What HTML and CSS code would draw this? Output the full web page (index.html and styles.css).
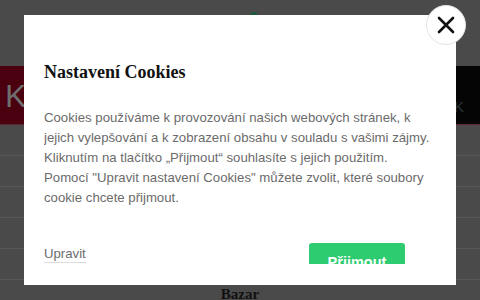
FILE: index.html
```html
<!DOCTYPE html>
<html lang="cs">
<head>
<meta charset="utf-8">
<link rel="stylesheet" href="styles.css">
</head>
<body>
<div class="page">
  <div class="topbar"><span class="dot"></span></div>
  <div class="band">
    <span class="k-left">K</span>
    <span class="band-dark"><span class="k-right">K</span></span>
  </div>
  <div class="row"></div>
  <div class="row"></div>
  <div class="row"></div>
  <div class="row"></div>
  <div class="row"></div>
  <div class="bazar">Bazar</div>
</div>

<div class="modal">
  <div class="modal-inner">
    <h2 class="title">Nastavení Cookies</h2>
    <p class="text">Cookies používáme k provozování našich webových stránek, k jejich vylepšování a k zobrazení obsahu v souladu s vašimi zájmy. Kliknutím na tlačítko „Přijmout“ souhlasíte s jejich použitím. Pomocí "Upravit nastavení Cookies" můžete zvolit, které soubory cookie chcete přijmout.</p>
    <div class="actions">
      <a class="edit">Upravit</a>
      <button class="accept">Přijmout</button>
    </div>
  </div>
</div>
<button class="close" aria-label="Zavřít">
  <svg width="18" height="18" viewBox="0 0 18 18"><path d="M2 2 L16 16 M16 2 L2 16" stroke="#111" stroke-width="2.6" stroke-linecap="round" fill="none"/></svg>
</button>
</body>
</html>
```
FILE: styles.css
```css
html, body {
  margin: 0;
  padding: 0;
  width: 480px;
  height: 300px;
  overflow: hidden;
  background: #4a4a4a;
}
.page {
  display: flex;
  flex-direction: column;
}
.topbar {
  height: 66px;
  position: relative;
}
.dot {
  position: absolute;
  left: 250px;
  top: 12px;
  width: 8px;
  height: 4px;
  border-radius: 4px 4px 0 0;
  background: #1f5a3e;
}
.band {
  height: 58px;
  display: flex;
  justify-content: space-between;
  background: #4b0010;
  border-bottom: 1px solid #5c2a32;
}
.k-left {
  font-family: "Liberation Sans", Arial, sans-serif;
  font-size: 32px;
  color: #6e6e6e;
  padding: 14px 0 0 5px;
  line-height: 1;
}
.band-dark {
  width: 50px;
  background: #050505;
  display: flex;
  justify-content: flex-end;
  align-items: flex-end;
}
.k-right {
  font-family: "Liberation Sans", Arial, sans-serif;
  font-size: 15px;
  color: #2a3438;
  padding: 0 16px 9px 0;
}
.row {
  height: 30px;
  border-bottom: 1px solid #585858;
}
.bazar {
  font-family: "Liberation Serif", "Times New Roman", serif;
  font-weight: bold;
  font-size: 15px;
  color: #111;
  text-align: center;
  padding-top: 6px;
}
.modal {
  position: absolute;
  left: 24px;
  top: 15px;
  width: 432px;
  height: 270px;
  background: #fff;
  box-sizing: border-box;
  padding: 0 20px 21px 20px;
}
.modal-inner {
  height: 249px;
  overflow: hidden;
  padding-top: 46px;
  box-sizing: border-box;
}
.title {
  margin: 0;
  font-family: "Liberation Serif", "Times New Roman", serif;
  font-weight: bold;
  font-size: 18px;
  line-height: 22px;
  color: #111;
}
.text {
  margin: 25px 0 0 0;
  font-family: "Liberation Sans", Arial, sans-serif;
  font-size: 13.2px;
  line-height: 20px;
  color: #6b6b6b;
}
.actions {
  margin-top: 35px;
  display: flex;
  justify-content: space-between;
  align-items: flex-start;
}
.edit {
  font-family: "Liberation Sans", Arial, sans-serif;
  font-size: 13.2px;
  line-height: 16px;
  color: #6b6b6b;
  margin-top: 3px;
  border-bottom: 1px solid #dcdcdc;
}
.accept {
  margin-right: 31px;
  width: 96px;
  border: none;
  border-radius: 3px;
  background: #2ecc71;
  color: #fff;
  font-family: "Liberation Sans", Arial, sans-serif;
  font-weight: bold;
  font-size: 14.5px;
  line-height: 16px;
  padding: 11px 0 12px 0;
  display: block;
}
.close {
  position: absolute;
  left: 426px;
  top: 5px;
  width: 40px;
  height: 40px;
  border-radius: 50%;
  background: #fff;
  border: 1px solid #e4e4e4;
  padding: 0;
  display: flex;
  align-items: center;
  justify-content: center;
}
```
